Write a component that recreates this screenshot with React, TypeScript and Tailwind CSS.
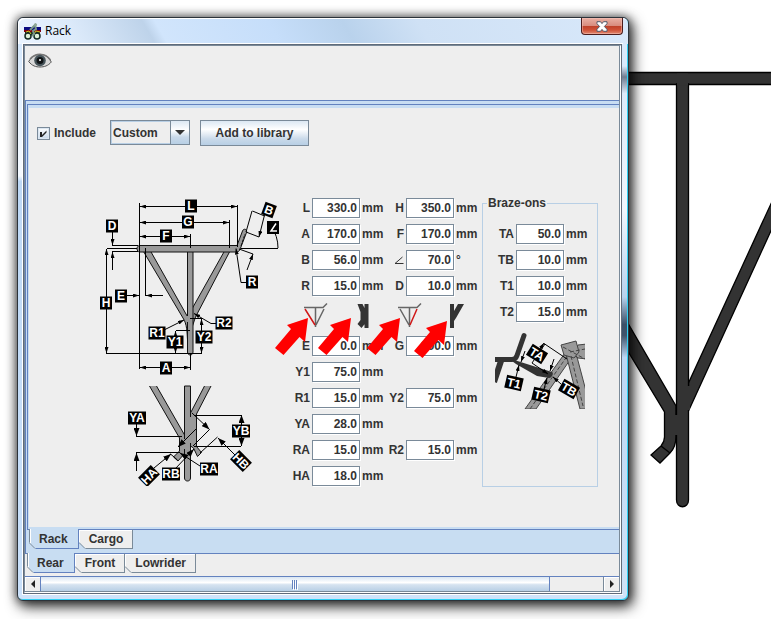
import { useState } from 'react';
import type { ReactNode } from 'react';

const FRAME_FIELDS = [
  [['L', '330.0', 'mm'], ['H', '350.0', 'mm']],
  [['A', '170.0', 'mm'], ['F', '170.0', 'mm']],
  [['B', '56.0', 'mm'], ['∠', '70.0', '°']],
  [['R', '15.0', 'mm'], ['D', '10.0', 'mm']],
];

const STAY_FIELDS = [
  [['E', '0.0', 'mm'], ['G', '300.0', 'mm']],
  [['Y1', '75.0', 'mm']],
  [['R1', '15.0', 'mm'], ['Y2', '75.0', 'mm']],
  [['YA', '28.0', 'mm']],
  [['RA', '15.0', 'mm'], ['R2', '15.0', 'mm']],
  [['HA', '18.0', 'mm']],
];

const BRAZE_FIELDS = [
  ['TA', '50.0', 'mm'],
  ['TB', '10.0', 'mm'],
  ['T1', '10.0', 'mm'],
  ['T2', '15.0', 'mm'],
];

function Field({ field }: { field: string[] }) {
  const [label, initial, unit] = field;
  const [value, setValue] = useState(initial);
  const id = `field-${label}`;

  return (
    <div className="flex h-5 items-center gap-0.5">
      <label htmlFor={id} className="flex w-[18px] justify-end">
        {label === '∠' ? (
          <svg viewBox="0 0 10 10" className="h-2.5 w-2.5" role="img" aria-label="Angle">
            <path d="M8.500 2 1 8.500h8.500" fill="none" stroke="#333" />
          </svg>
        ) : (
          label
        )}
      </label>
      <input
        id={id}
        type="text"
        value={value}
        onChange={(e) => setValue(e.target.value)}
        className="h-5 w-12 border border-[#7a8a99] bg-white pr-0.5 text-right shadow-[inset_-1px_-1px_0_#fff,1px_1px_0_#fff] focus:outline-none"
      />
      <span className="w-[22px]">{unit}</span>
    </div>
  );
}

function FieldRows({ rows }: { rows: string[][][] }) {
  return (
    <>
      {rows.map((row) => (
        <div key={row[0][0]} className="flex gap-0.5">
          {row.map((field) => (
            <Field key={field[0]} field={field} />
          ))}
        </div>
      ))}
    </>
  );
}

function Tag({ x, y, w = 12, rot = 0, children }: { x: number; y: number; w?: number; rot?: number; children: string }) {
  return (
    <g transform={`translate(${x} ${y}) rotate(${rot})`}>
      <rect x={-w / 2} y={-6.5} width={w} height={13} fill="#000" />
      <text y={4.3} textAnchor="middle" fill="#fff" fontSize={12} fontWeight="bold">
        {children}
      </text>
    </g>
  );
}

// One path per line, since a marker only lands on the ends of a whole path
function Arrows({ lines, both, tip = 'tip' }: { lines: string[]; both?: boolean; tip?: string }) {
  return (
    <g fill="none" stroke="#000">
      {lines.map((d) => (
        <path key={d} d={d} markerStart={both ? `url(#${tip})` : undefined} markerEnd={`url(#${tip})`} />
      ))}
    </g>
  );
}

function RackDiagram() {
  return (
    <svg viewBox="100 198 190 288" className="h-72 w-[190px] shrink-0" role="img" aria-label="Rack dimensions">
      <defs>
        <marker id="tip" viewBox="0 0 6 4" refX="6" refY="2" markerWidth="6" markerHeight="4" markerUnits="userSpaceOnUse" orient="auto-start-reverse">
          <path d="M0 0 6 2 0 4z" />
        </marker>
        <marker id="bigtip" viewBox="0 0 8 6" refX="8" refY="3" markerWidth="8" markerHeight="6" markerUnits="userSpaceOnUse" orient="auto-start-reverse">
          <path d="M0 0 8 3 0 6z" />
        </marker>
      </defs>

      {/* side view of the rack */}
      <g fill="#999" stroke="#111" strokeWidth="1" strokeLinejoin="round">
        <path d="M143.5 251.500 183 318c4 6 4 14 4.500 22h3V322L150.500 251z" />
        <path d="M224.500 251 192.500 308v18l3-9 34.500-66z" />
        <path d="M187.500 251v101c0 4 5.500 4 5.500 0V251z" />
        <path d="M140 245.500h97l5.500-14.500c1-3 5-2 4 1.500l-6.500 17c-1 2-2 2.500-4 2.500h-96c-4 0-4-6.500 0-6.500z" />
        <path d="m241 246 4-12" fill="none" strokeDasharray="3 1" />
        <path d="M186 316h3v6h-3z" stroke="none" />
      </g>
      <path
        d="M139.500 203v166M145.500 248v48M237.500 205v42M229.500 220v28M190.500 234v14M190.500 354v16M112 245.500h26M112 251.500h26M107 248.500h30M106 353.500h96M176 330.500h14M190 318.500h12M241 248.500h37M246 232l6-21M252.500 211l12 5M246 232l13 5M239 249l14 5M271 226q7 10 7 22"
        fill="none"
        stroke="#000"
      />
      <Arrows
        both
        lines={[
          'M140 206.500h97',
          'M140 222.500h89',
          'M140 236.500h50',
          'M140 367.500h50',
          'M106.500 249v104',
          'M175.500 331v22',
          'M201.500 319v34',
        ]}
      />
      <Arrows
        lines={[
          'M112.500 231v14',
          'M112.500 270v-18',
          'M126 295.500h13',
          'M163 295.500h-17',
          'M264.500 215 259 237',
          'M247 270l6-16',
          'M246 282.500h-5l-5-34',
          'M164 330l20-10',
          'M216 323.500h-5l-17-10',
        ]}
      />
      <Tag x={191} y={206}>L</Tag>
      <Tag x={188} y={222}>G</Tag>
      <Tag x={166} y={236}>F</Tag>
      <Tag x={112} y={226}>D</Tag>
      <Tag x={121} y={296}>E</Tag>
      <Tag x={106} y={303}>H</Tag>
      <Tag x={166} y={368}>A</Tag>
      <Tag x={269} y={210} rot={20}>B</Tag>
      <g>
        <rect x="267" y="221" width="12" height="13" />
        <path d="m276 223.500-5 7.500h6" fill="none" stroke="#fff" strokeWidth="1.500" />
      </g>
      <Tag x={252} y={282}>R</Tag>
      <Tag x={157} y={333} w={17}>R1</Tag>
      <Tag x={224} y={323} w={17}>R2</Tag>
      <Tag x={175} y={342} w={17}>Y1</Tag>
      <Tag x={204} y={337} w={17}>Y2</Tag>

      {/* lower end, enlarged */}
      <g fill="#999" stroke="#111" strokeWidth="1">
        <path d="M149.500 386 179.500 438v13l-6 6 4.500 4 7-8 3-5V441L156.500 386" />
        <path d="M204.500 386 190.500 413v33l3 2 4 8.500 4-4-5-6V414l14.500-28" />
        <path d="M184.500 386v92c0 4 6 4 6 0V386z" />
        <path d="M181 439h8v11h-8zM188 417h7.500v29H188z" stroke="none" />
        <path d="M184.500 386v46M190.500 386v31M184.500 449v12M190.500 443v20" fill="none" />
      </g>
      <path
        d="M136 436.500h46M136 452.500h44M194 415.500h47M194 446.500h47M209.500 429.500 193 446M170.500 454l7 6M217.500 437 200 453"
        fill="none"
        stroke="#000"
      />
      <Arrows both tip="bigtip" lines={['M241.500 415v31']} />
      <Arrows
        tip="bigtip"
        lines={[
          'M136.500 424v12',
          'M136.500 471v-18',
          'M192 413l17.500 16.500',
          'M196 429l-18 18',
          'M200 466l-20-13',
          'M175 469l19-20',
          'M154 468l17-14',
          'M236 456l-18-18',
        ]}
      />
      <Tag x={137} y={418} w={18}>YA</Tag>
      <Tag x={241} y={431} w={18}>YB</Tag>
      <Tag x={209} y={469} w={18}>RA</Tag>
      <Tag x={171} y={474} w={18}>RB</Tag>
      <Tag x={149} y={476} w={18} rot={-45}>HA</Tag>
      <Tag x={241} y={461} w={18} rot={45}>HB</Tag>
    </svg>
  );
}

function BrazeDiagram() {
  return (
    <svg viewBox="495 331 90 78" className="ml-3 h-[78px] w-[90px]" role="img" aria-label="Braze-on dimensions">
      <g fill="#999" stroke="#444" strokeWidth="1">
        <path d="m525 409 40-56 7 4-36 52z" />
        <path d="m566 354 14 55h6v-18l-9-34z" />
        <path d="m573 353 5-8 9-1v15l-9-1z" />
        <path d="m561 345 15-4 3 11-5 6-10-3z" />
        <path d="m530 409 38-54M571 356l12 50M563 347l22 12M570 352l15-3" fill="none" strokeDasharray="4 2" />
      </g>
      <g fill="none" stroke="#333">
        <path d="M493 359.500h19c2 0 4-1 5-4l7-20" strokeWidth="5" strokeLinecap="round" />
        <path d="m494 382 7-21" strokeWidth="6" />
      </g>
      <path d="m508 358 44 14c2 1 0 6-3 6l-12-2-21-12z" fill="#333" />
      <path d="M544 343.500 567 359M532 363l13-19" fill="none" stroke="#000" />
      <Arrows
        lines={[
          'M540 349l4-6',
          'M525 351l-4 11',
          'M516 377l3-12',
          'M554 359l-4 12',
          'M544 389l3-11',
          'M561 384l-8-7',
          'M532 363l16 11',
        ]}
      />
      <Tag x={537} y={354} w={18} rot={32}>TA</Tag>
      <Tag x={514} y={383} w={17} rot={13}>T1</Tag>
      <Tag x={541} y={395} w={17} rot={13}>T2</Tag>
      <Tag x={569} y={389} w={18} rot={30}>TB</Tag>
    </svg>
  );
}

function StayIcons() {
  return (
    <svg viewBox="292 302 186 28" className="h-7 w-full" role="img" aria-label="Stay and joint shapes">
      <g fill="none" stroke="#666" strokeWidth="1.500">
        <path d="M304 307.500h19l4-4M315.500 308v19M324 309l-8 16" />
        <path d="M398 307.500h19l4-4M409.500 308v19M400 309l9 16" />
        <path d="m305 309 10 16M417 309l-7 16" stroke="#d01818" />
      </g>
      <g fill="#333">
        <path d="M364.500 304h4v24h-4zM357.500 304h5l3 6v13l-4 5-4-4 3-4v-8z" />
        <path d="M450 304h4v7l4-7h6l-8 14-2 3v7h-4z" />
      </g>
    </svg>
  );
}

function RedArrows() {
  return (
    <svg viewBox="270 300 210 70" className="pointer-events-none absolute top-[102px] -left-[22px] h-[70px] w-[210px]" aria-hidden="true">
      {[[0, 0], [43, 0], [92, 0], [139, 3]].map(([dx, dy]) => (
        <path
          key={dx}
          d="m308 318-21 7 4 4-16 19 8.500 7 16-18 5.500 5z"
          transform={`translate(${dx} ${dy})`}
          fill="#f00"
        />
      ))}
    </svg>
  );
}

function Tab({ selected, inner, onClick, children }: { selected: boolean; inner?: boolean; onClick: () => void; children: ReactNode }) {
  return (
    <button
      type="button"
      role="tab"
      aria-selected={selected}
      onClick={onClick}
      className={
        selected
          ? 'relative -mt-px h-5 border-r border-b border-[#6382bf] bg-[#c8ddf2] px-2.5 shadow-[inset_1px_0_0_#7a8a99,inset_2px_0_0_#fff]'
          : 'relative -mt-px h-5 border-t border-r border-b border-t-[#6382bf] border-r-[#7a8a99] border-b-[#7a8a99] bg-[#eee] pr-[9px] pl-2.5 shadow-[inset_1px_1px_0_#fff]'
      }
    >
      {children}
      <svg viewBox="0 0 7 7" className="absolute -bottom-px left-0 h-[7px] w-[7px]" aria-hidden="true">
        <path d="M0 0v7h7z" fill={inner ? '#c8ddf2' : '#eee'} />
        <path d="m0 .5 6 6" stroke="#7a8a99" />
      </svg>
    </button>
  );
}

function Backdrop() {
  return (
    <svg viewBox="611 0 160 619" className="absolute top-0 right-0 h-[619px] w-40" aria-hidden="true">
      <g fill="#333" stroke="#000" strokeWidth="1.300">
        <path d="M600 72.500h180v12H600z" />
        <path d="M600 305 664.500 412v25c0 4-1 6-3.500 9l-10 9 9 8 10-10c4-4 6-8 6-17V406L600 275z" />
        <path d="M775 195 688.500 383v28L775 222z" />
        <path d="M676.500 84v416c0 9 12 9 12 0V84z" />
      </g>
      <path d="M677 73.500h11v12h-11zM674 415h5v20h-5zM686 386h4v24h-4z" fill="#333" />
      <path d="m661 446 9 7" stroke="#000" strokeWidth="1.500" />
    </svg>
  );
}

function TitleBar() {
  return (
    <header className="flex h-[26px] items-start rounded-t-md bg-[linear-gradient(60deg,#eaf4ff,#dceafa_10%,#bed3ea_22%,#d1e5fc_24%,#c6defa_42%,#b9d2ec_54%,#cfe1f5_66%,#d8e8fa)] pl-1.5 shadow-[inset_1px_1px_0_#fff]">
      <svg viewBox="0 0 17 17" className="mt-[5px] h-[17px] w-[17px]" aria-hidden="true">
        <path d="M0 4h17v3H0z" fill="#0a0a80" />
        <path d="M0 7h17v2H0z" fill="#800010" />
        <path d="M1 9h15v4H1z" fill="#1c2c20" />
        <circle cx="4" cy="13" r="3" fill="#dff3dc" stroke="#142c24" strokeWidth="1.500" />
        <circle cx="13" cy="13" r="3" fill="#dff3dc" stroke="#142c24" strokeWidth="1.500" />
        <path d="m2 9 3-1 2 3M10 11l2-3 4 1" stroke="#c8c820" fill="none" />
        <path d="m6 7 5-5 1 4-3 2 1 3-2 2" stroke="#789888" strokeWidth="2" fill="none" />
        <circle cx="11.500" cy="1.800" r="1.600" fill="#90a898" />
      </svg>
      <h1 className="ml-1 pt-1 font-['Open_Sans','Noto_Sans',sans-serif] text-xs leading-[18px] font-normal text-black">
        Rack
      </h1>
      <button
        type="button"
        aria-label="Close"
        className="mr-[5px] ml-auto flex h-[17px] w-[42px] items-center justify-center rounded-b border border-t-0 border-[#4b1c1c] bg-[linear-gradient(#e9b0a4,#d88c7e_48%,#bd4029_50%,#cf5137_75%,#e18a72)] shadow-[inset_0_0_0_1px_#f5c4ba80]"
      >
        <svg viewBox="0 0 12 11" className="h-[11px] w-3" aria-hidden="true">
          <path d="M1 .7h3.500L6 2.600 7.500.7H11v2L8.400 5.500 11 8.300v2H7.500L6 8.400l-1.500 1.900H1v-2l2.600-2.800L1 2.700z" fill="#fff" stroke="#535b6b" />
        </svg>
      </button>
    </header>
  );
}

function EyeIcon() {
  return (
    <svg viewBox="0 0 24 16" className="h-4 w-6" aria-hidden="true">
      <path d="M.7 8.500C4 3 8 1.500 12 1.500S20 3 23.300 9C20 13 16 14 12 14S4 13 .7 8.500z" fill="#d8d8d8" stroke="#555" strokeWidth="1" />
      <path d="M2 6C6 1.500 9 1.200 12 1.200S19 2 22.500 7" fill="none" stroke="#777" strokeWidth="1.500" />
      <circle cx="12" cy="7.500" r="5.800" fill="#46545a" />
      <circle cx="12" cy="7.500" r="3.500" fill="#101416" />
      <circle cx="12" cy="7" r="1" fill="#fff" />
    </svg>
  );
}

function ScrollBar() {
  return (
    <div className="flex h-4 border-t border-b border-t-[#6382bf] border-b-[#7a8a99] bg-[#eee]">
      <button type="button" aria-label="Scroll left" className="flex w-4 shrink-0 items-center justify-center border-r border-[#6382bf] shadow-[inset_1px_1px_0_#fff]">
        <svg viewBox="0 0 4 8" className="h-2 w-1" aria-hidden="true">
          <path d="M4 0v8L0 4z" fill="#222" />
        </svg>
      </button>
      <div className="flex flex-1">
        <div className="flex w-[90.5%] items-center justify-center gap-px border-r border-[#6382bf] bg-[linear-gradient(#d9e6f2,#fff_40%,#d6e3f0_55%,#b8cfe5)]">
          <span className="h-[9px] w-px bg-[#6382bf] shadow-[1px_1px_0_#fff]" />
          <span className="h-[9px] w-px bg-[#6382bf] shadow-[1px_1px_0_#fff]" />
          <span className="h-[9px] w-px bg-[#6382bf] shadow-[1px_1px_0_#fff]" />
        </div>
      </div>
      <button type="button" aria-label="Scroll right" className="flex w-4 shrink-0 items-center justify-center border-l border-[#7a8a99] shadow-[inset_1px_1px_0_#fff]">
        <svg viewBox="0 0 4 8" className="h-2 w-1" aria-hidden="true">
          <path d="M0 0v8l4-4z" fill="#222" />
        </svg>
      </button>
    </div>
  );
}

function RackPanel() {
  const [include, setInclude] = useState(true);

  return (
    <div className="flex-1 bg-[#eee] pt-3">
      <div className="flex items-start pl-2">
        <label className="relative flex h-[26px] items-center gap-1">
          <input
            type="checkbox"
            checked={include}
            onChange={(e) => setInclude(e.target.checked)}
            className="h-[13px] w-[13px] appearance-none border border-[#7a8a99] bg-[linear-gradient(#fff,#c8d9ea)] shadow-[inset_0_0_0_1px_#dbe6f1]"
          />
          {include && (
            <svg viewBox="0 0 13 13" className="pointer-events-none absolute left-0 h-[13px] w-[13px]" aria-hidden="true">
              <path d="M3 5h2v3l4.500-4.500v2L5 10H3z" fill="#222" />
            </svg>
          )}
          Include
        </label>
        <div className="relative ml-3.5">
          <select
            aria-label="Rack model"
            className="h-[25px] w-20 appearance-none border border-[#7a8a99] bg-[#eee] pr-5 pl-0.5 shadow-[inset_0_0_0_1px_#b8cfe5] focus:outline-none"
          >
            <option>Custom</option>
          </select>
          <span className="pointer-events-none absolute top-0 right-0 flex h-[25px] w-5 items-center justify-center border border-[#7a8a99] bg-[linear-gradient(#dce8f3,#fff_40%,#c9d9e9_70%,#b8cfe5)]">
            <svg viewBox="0 0 10 5" className="h-[5px] w-2.5" aria-hidden="true">
              <path d="M0 0h10L5 5z" fill="#333" />
            </svg>
          </span>
        </div>
        <button
          type="button"
          className="ml-2.5 h-[26px] w-[109px] border border-[#7a8a99] bg-[linear-gradient(#dce8f3,#fff_35%,#c9d9e9_75%,#b8cfe5)]"
        >
          Add to library
        </button>
      </div>

      <div className="mt-[52px] flex items-start pl-[71px]">
        <RackDiagram />
        <div className="relative ml-0.5 flex w-[186px] shrink-0 flex-col gap-1.5">
          <FieldRows rows={FRAME_FIELDS} />
          <StayIcons />
          <FieldRows rows={STAY_FIELDS} />
          <RedArrows />
        </div>
        <fieldset className="-mt-0.5 ml-1 h-[291px] w-[116px] shrink-0 border border-[#b8cfe5]">
          <legend className="ml-1 px-px leading-[14px]">Braze-ons</legend>
          <div className="flex flex-col gap-1.5 pt-3.5 pl-[13px]">
            {BRAZE_FIELDS.map((field) => (
              <Field key={field[0]} field={field} />
            ))}
          </div>
          <div className="mt-[9px]">
            <BrazeDiagram />
          </div>
        </fieldset>
      </div>
    </div>
  );
}

export default function App() {
  const [page, setPage] = useState('Rack');
  const [position, setPosition] = useState('Rear');

  return (
    <div className="relative flex min-h-screen flex-col overflow-hidden bg-white pt-[17px] pr-[142px] pb-[18px] pl-[17px] font-['Liberation_Sans',Arial,sans-serif] text-xs font-bold text-[#333]">
      <Backdrop />
      <main className="relative flex flex-1 flex-col rounded-md border border-[#2c333a] bg-[#cfe3fa] shadow-[inset_-1px_-1px_0_#2fd0f4,3px_5px_14px_1px_#000000c0,0_0_10px_1px_#00000080]">
        <TitleBar />
        <div className="flex flex-1">
          <div className="w-[5px] bg-[linear-gradient(#d5e8fc,#f4f9ff_24%,#bdd8f5_25%,#c9e0fa)]" />
          <div className="flex min-w-0 flex-1 flex-col border border-[#5f6b7a] shadow-[0_0_0_1px_#fff]">
            <div className="flex min-w-0 flex-1 flex-col border border-t-[#7a8a99] border-r-white border-b-white border-l-[#7a8a99]">
              <div className="flex flex-1 flex-col border-r border-[#7a8a99] bg-[#eee]">
                <div className="h-[54px] pt-[7px] pl-[3px]">
                  <button type="button" aria-label="Show or hide" className="block">
                    <EyeIcon />
                  </button>
                </div>
                <div className="flex flex-1 flex-col border-t border-l border-[#6382bf] bg-[#c8ddf2] pt-[3px] pl-px">
                  <div className="flex flex-1 flex-col border-t border-l border-[#6382bf] pt-[3px] pb-0.5 pl-px">
                    <RackPanel />
                  </div>
                  <div role="tablist" aria-label="Page" className="flex h-6 items-start border-t border-[#6382bf] pl-0.5">
                    {['Rack', 'Cargo'].map((name) => (
                      <Tab key={name} inner selected={page === name} onClick={() => setPage(name)}>
                        {name}
                      </Tab>
                    ))}
                  </div>
                </div>
                <div role="tablist" aria-label="Position" className="flex h-[23px] items-start border-t border-[#6382bf] pl-0.5">
                  {['Rear', 'Front', 'Lowrider'].map((name) => (
                    <Tab key={name} selected={position === name} onClick={() => setPosition(name)}>
                      {name}
                    </Tab>
                  ))}
                </div>
                <ScrollBar />
              </div>
            </div>
          </div>
          <div className="w-1.5 bg-[linear-gradient(#d9e9fb_0_4%,#707c90_6%,#dce9f8_9%,#f0f6fd_30%,#b8d2ee_46%,#3c5068_51%,#40546c_53%,#bcd7f5_57%,#cfe2f6)] shadow-[inset_-1px_0_0_#2fd0f4]" />
        </div>
        <div className="h-1.5" />
      </main>
    </div>
  );
}
